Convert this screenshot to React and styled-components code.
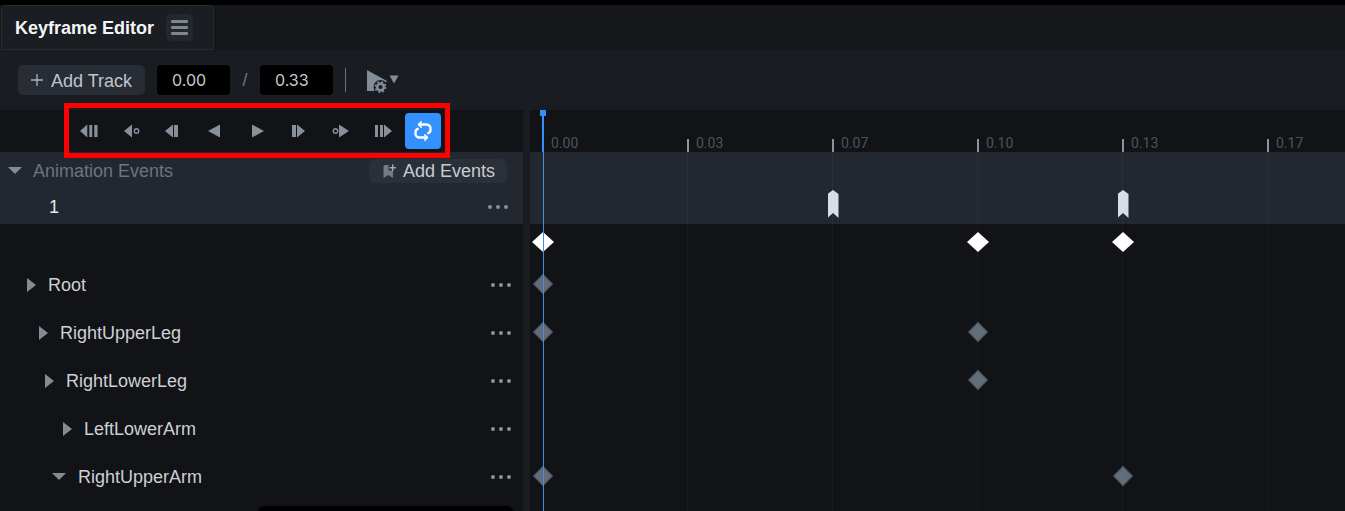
import React from "react";
import styled, { createGlobalStyle } from "styled-components";

const GlobalStyle = createGlobalStyle`
  html, body {
    margin: 0;
    padding: 0;
    background: #121317;
    font-family: "Liberation Sans", Arial, sans-serif;
  }
`;

const TICK_GAP = 145;
const ORIGIN = 13;
const ticks = ["0.00", "0.03", "0.07", "0.10", "0.13", "0.17"];

const tracks = [
  { name: "Root", indent: 27, keys: [0] },
  { name: "RightUpperLeg", indent: 39, keys: [0, 3] },
  { name: "RightLowerLeg", indent: 45, keys: [3] },
  { name: "LeftLowerArm", indent: 63, keys: [] },
  { name: "RightUpperArm", indent: 52, open: true, keys: [0, 4] },
];

const App = () => {
  return (
    <Page>
      <GlobalStyle />
      <TopStrip />
      <TabBar>
        <Tab>
          <TabTitle>Keyframe Editor</TabTitle>
          <MenuButton>
            <span />
            <span />
            <span />
          </MenuButton>
        </Tab>
      </TabBar>
      <Toolbar>
        <AddTrack>
          <PlusIcon />
          <Label>Add Track</Label>
        </AddTrack>
        <TimeBox>0.00</TimeBox>
        <Slash>/</Slash>
        <TimeBox>0.33</TimeBox>
        <Divider />
        <PlaySettings />
      </Toolbar>
      <Body>
        <TrackPanel>
          <TransportRow>
            <TransportIcon>
              <path d="M10.300 5.500v13L3 12zM12.300 6h2.900v12h-2.900zM17.300 6h3.200v12h-3.200z" />
            </TransportIcon>
            <TransportIcon>
              <path d="M13 5.500v13L5 12z" />
              <Ring cx="17.500" cy="12" r="2.200" />
            </TransportIcon>
            <TransportIcon>
              <path d="M12 5.500v13L4 12zM13 6h4v12h-4z" />
            </TransportIcon>
            <TransportIcon>
              <path d="M17 5.500v13L5 12z" />
            </TransportIcon>
            <TransportIcon>
              <path d="M7 5.500v13L19 12z" />
            </TransportIcon>
            <TransportIcon>
              <path d="M5 6h4v12H5zM10 5.500v13L18 12z" />
            </TransportIcon>
            <TransportIcon>
              <Ring cx="6.500" cy="12" r="2.200" />
              <path d="M10 5.500v13L20 12z" />
            </TransportIcon>
            <TransportIcon>
              <path d="M4 6h3v12H4zM9 6h3v12H9zM13 5.500v13L21 12z" />
            </TransportIcon>
            <LoopButton>
              <svg width="22" height="22" viewBox="0 0 22 22" fill="none" stroke="#fff" strokeWidth="2.400" strokeLinecap="round" strokeLinejoin="round">
                <path d="M7 4.500h7.500a4 4 0 0 1 4 4V10a3.500 3.500 0 0 1-2.200 3.200" />
                <path d="M9 2L6.800 4.500 9 7" strokeWidth="1.800" />
                <path d="M15 17.500H7.500a4 4 0 0 1-4-4V12a3.500 3.500 0 0 1 2.200-3.200" />
                <path d="M13 15l2.200 2.500L13 20" strokeWidth="1.800" />
              </svg>
            </LoopButton>
          </TransportRow>

          <EventsBand>
            <EventsHead>
              <DownArrow />
              <EventsTitle>Animation Events</EventsTitle>
              <AddEvents>
                <svg width="16" height="18" viewBox="0 0 16 18">
                  <path d="M.5 4.500Q.5 3 2 3H5.500V8.500H10V16L5.200 13 .5 16z" fill="#737b87" />
                  <path d="M9 2.500h1.400v2.500h2.500v1.400h-2.500v2.500H9V6.400H6.500V5H9z" fill="#a6abb3" />
                </svg>
                <AddEventsLabel>Add Events</AddEventsLabel>
              </AddEvents>
            </EventsHead>
            <EventRow>
              <EventName>1</EventName>
              <Dots $right={15} />
            </EventRow>
          </EventsBand>

          <SummarySpacer />

          {tracks.map((track) => (
            <TrackRow key={track.name} $indent={track.indent}>
              {track.open ? <TreeDown /> : <RightArrow />}
              <TrackName>{track.name}</TrackName>
              <Dots $right={12} />
            </TrackRow>
          ))}
          <TrackRow $indent={27}>
            <ChildField />
          </TrackRow>
        </TrackPanel>

        <Splitter />

        <Timeline>
          <Ruler>
            {ticks.map((label, i) => (
              <RulerCell key={label}>
                {i > 0 && <Tick />}
                <RulerLabel>{label}</RulerLabel>
              </RulerCell>
            ))}
          </Ruler>

          <TimelineBand>
            <EventFlag $at={2} />
            <EventFlag $at={4} />
          </TimelineBand>

          <KeyLane $height={36}>
            <WhiteKey $at={0} />
            <WhiteKey $at={3} />
            <WhiteKey $at={4} />
          </KeyLane>

          {tracks.map((track) => (
            <KeyLane key={track.name} $height={48}>
              {track.keys.map((k) => (
                <GrayKey key={k} $at={k} />
              ))}
            </KeyLane>
          ))}

          <GridLines />
          <Playhead />
        </Timeline>
      </Body>

      <Highlight />
    </Page>
  );
};

const Page = styled.div`
  position: relative;
  display: flex;
  flex-direction: column;
  width: 1345px;
  height: 511px;
  overflow: hidden;
  background: #121317;
  color: #d5d8dc;
  font-size: 18px;
`;

const TopStrip = styled.div`
  height: 5px;
  background: #000;
`;

const TabBar = styled.div`
  display: flex;
  height: 45px;
  padding-left: 1px;
  background: #15171b;
`;

const Tab = styled.div`
  display: flex;
  align-items: center;
  box-sizing: border-box;
  width: 213px;
  padding-left: 13px;
  background: #1a1d22;
  border: 1px solid #262a31;
  border-radius: 4px 4px 0 0;
`;

const TabTitle = styled.div`
  margin-top: 1px;
  font-weight: 700;
  color: #f4f5f6;
  white-space: nowrap;
`;

const MenuButton = styled.div`
  display: flex;
  flex-direction: column;
  justify-content: center;
  gap: 3px;
  box-sizing: border-box;
  width: 27px;
  height: 27px;
  margin-left: 12px;
  padding: 0 5px;
  background: #23272e;
  border-radius: 5px;

  span {
    height: 3px;
    border-radius: 1px;
    background: #7f8690;
  }
`;

const Toolbar = styled.div`
  display: flex;
  align-items: center;
  height: 60px;
  padding-left: 18px;
  background: #191c20;
`;

const AddTrack = styled.div`
  display: flex;
  align-items: center;
  box-sizing: border-box;
  width: 127px;
  height: 30px;
  margin-right: 12px;
  padding-left: 13px;
  background: #272c35;
  border-radius: 5px;
  color: #c0c5cb;
  white-space: nowrap;
`;

const Label = styled.span`
  margin-top: 2px;
`;

const PlusIcon = () => (
  <svg width="12" height="12" viewBox="0 0 12 12" stroke="#b0b5bc" strokeWidth="1.300" style={{ marginRight: 8 }}>
    <path d="M6 0v12M0 6h12" />
  </svg>
);

const TimeBox = styled.div`
  display: flex;
  align-items: center;
  box-sizing: border-box;
  width: 73px;
  height: 30px;
  padding-left: 15px;
  background: #000;
  border-radius: 4px;
  color: #c7cad0;
  font-family: Inter, "Liberation Sans", sans-serif;
  font-size: 16px;
`;

const Slash = styled.div`
  width: 30px;
  text-align: center;
  color: #6d7480;
`;

const Divider = styled.div`
  width: 1px;
  height: 24px;
  margin: 0 21px 0 12px;
  background: #6a7079;
`;

const PlaySettings = () => (
  <svg width="32" height="28" viewBox="0 0 32 28" style={{ marginTop: 2 }}>
    <path d="M0 3v21h12l8-10z" fill="#838c97" />
    <circle cx="13.500" cy="20" r="7" fill="#191c20" />
    <circle cx="13.500" cy="20" r="3.300" fill="none" stroke="#838c97" strokeWidth="2.400" />
    <circle cx="13.500" cy="20" r="5" fill="none" stroke="#838c97" strokeWidth="1.800" strokeDasharray="2 1.930" />
    <path d="M22.500 8.500h9l-4.500 8z" fill="#838c97" />
  </svg>
);

const Body = styled.div`
  display: flex;
  flex: 1;
  min-height: 0;
`;

const TrackPanel = styled.div`
  width: 523px;
  flex-shrink: 0;
  background: #121317;
`;

const Splitter = styled.div`
  width: 7px;
  flex-shrink: 0;
  background: #191c20;
`;

const TransportRow = styled.div`
  display: flex;
  align-items: center;
  height: 42px;
  padding-left: 68px;
`;

const IconCell = styled.div`
  display: flex;
  align-items: center;
  justify-content: center;
  width: 42px;
  height: 35px;
  margin-top: -1px;
  svg {
    fill: #87909b;
  }
`;

const TransportIcon = ({ children }) => (
  <IconCell>
    <svg width="24" height="24" viewBox="0 0 24 24">
      {children}
    </svg>
  </IconCell>
);

const Ring = styled.circle`
  fill: none;
  stroke: #87909b;
  stroke-width: 1.400;
`;

const LoopButton = styled.div`
  display: flex;
  align-items: center;
  justify-content: center;
  width: 36px;
  height: 36px;
  margin-left: 1px;
  background: #3390ff;
  border-radius: 4px;
`;

const EventsBand = styled.div`
  height: 72px;
  background: #23272f;
`;

const EventsHead = styled.div`
  display: flex;
  align-items: center;
  height: 36px;
  padding: 0 16px 0 8px;
`;

const DownArrow = styled.div`
  width: 0;
  height: 0;
  margin-top: 1px;
  margin-right: 11px;
  border-left: 7px solid transparent;
  border-right: 7px solid transparent;
  border-top: 7px solid #858b94;
`;

const EventsTitle = styled.div`
  flex: 1;
  margin-top: 2px;
  color: #6d7480;
`;

const AddEvents = styled.div`
  display: flex;
  align-items: center;
  gap: 4px;
  box-sizing: border-box;
  width: 138px;
  height: 24px;
  margin-top: 1px;
  padding-left: 14px;
  background: #2a2f38;
  border-radius: 6px;
  color: #c8ccd2;
  white-space: nowrap;
`;

const AddEventsLabel = styled.span`
  margin-top: 2px;
`;

const EventRow = styled.div`
  position: relative;
  display: flex;
  align-items: center;
  height: 36px;
  padding-left: 49px;
`;

const EventName = styled.div`
  margin-top: 2px;
  color: #e6e8eb;
`;

const Dots = styled.div`
  position: absolute;
  top: 50%;
  right: ${(p) => p.$right}px;
  width: 4px;
  height: 4px;
  margin-top: -1px;
  margin-right: 8px;
  border-radius: 50%;
  background: #8b919a;
  box-shadow: -8px 0 0 #8b919a, 8px 0 0 #8b919a;
`;

const SummarySpacer = styled.div`
  height: 36px;
`;

const TrackRow = styled.div`
  position: relative;
  display: flex;
  align-items: center;
  height: 48px;
  padding-left: ${(p) => p.$indent}px;
`;

const RightArrow = styled.div`
  width: 0;
  height: 0;
  margin-top: 1px;
  margin-right: 12px;
  border-top: 7px solid transparent;
  border-bottom: 7px solid transparent;
  border-left: 9px solid #858b94;
`;

const TreeDown = styled(DownArrow)`
  margin-right: 12px;
`;

const TrackName = styled.div`
  margin-top: 2px;
  color: #cdd0d5;
`;

const ChildField = styled.div`
  position: absolute;
  top: 6px;
  left: 258px;
  width: 255px;
  height: 36px;
  background: #000;
  border-radius: 6px;
`;

const Timeline = styled.div`
  position: relative;
  flex: 1;
  min-width: 0;
  background: #121317;
`;

const Ruler = styled.div`
  display: flex;
  height: 42px;
  padding-left: ${ORIGIN}px;
`;

const RulerCell = styled.div`
  position: relative;
  flex: 0 0 ${TICK_GAP}px;
`;

const Tick = styled.div`
  position: absolute;
  left: -1px;
  bottom: 0;
  width: 2px;
  height: 13px;
  background: #8c939c;
`;

const RulerLabel = styled.div`
  position: absolute;
  left: 8px;
  bottom: 1px;
  font-family: Roboto, sans-serif;
  font-size: 14px;
  color: #4e535b;
`;

const TimelineBand = styled.div`
  position: relative;
  height: 72px;
  background: #23272f;
`;

const EventFlag = styled.div`
  position: absolute;
  top: 38px;
  left: ${(p) => ORIGIN + p.$at * TICK_GAP - 5.5}px;
  width: 11px;
  height: 28px;
  background: #d9dde5;
  clip-path: polygon(50% 0, 100% 14%, 100% 100%, 50% 82%, 0 100%, 0 14%);
`;

const KeyLane = styled.div`
  position: relative;
  height: ${(p) => p.$height}px;
`;

const WhiteKey = styled.div`
  position: absolute;
  top: 8px;
  left: ${(p) => ORIGIN + p.$at * TICK_GAP - 11}px;
  width: 22px;
  height: 20px;
  background: #fff;
  clip-path: polygon(50% 0, 100% 50%, 50% 100%, 0 50%);
`;

const GrayKey = styled.div`
  position: absolute;
  top: 17px;
  left: ${(p) => ORIGIN + p.$at * TICK_GAP - 7}px;
  width: 14px;
  height: 14px;
  box-sizing: border-box;
  background: #636c79;
  border: 1px solid #4f5762;
  transform: rotate(45deg);
`;

const GridLines = styled.div`
  position: absolute;
  top: 42px;
  bottom: 0;
  left: ${ORIGIN + TICK_GAP - 1}px;
  right: 0;
  background: repeating-linear-gradient(
    to right,
    rgba(255, 255, 255, 0.035) 0 1px,
    transparent 1px ${TICK_GAP}px
  );
  pointer-events: none;
`;

const Playhead = styled.div`
  position: absolute;
  top: 0;
  bottom: 0;
  left: ${ORIGIN}px;
  width: 1px;
  background: #4a8ddb;
  pointer-events: none;

  &::before {
    content: "";
    position: absolute;
    top: 0;
    left: -3px;
    width: 6px;
    height: 6px;
    background: #3390ff;
  }

  &::after {
    content: "";
    position: absolute;
    top: 0;
    left: -1px;
    width: 2px;
    height: 42px;
    background: #3390ff;
  }
`;

const Highlight = styled.div`
  position: absolute;
  top: 103px;
  left: 64px;
  width: 386px;
  height: 55px;
  box-sizing: border-box;
  border: 5px solid #fe0000;
  pointer-events: none;
`;

export default App;
